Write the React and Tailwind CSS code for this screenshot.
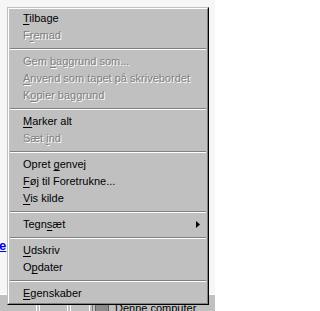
import React from "react";

const font = { fontFamily: '"Liberation Sans", Arial, sans-serif' };

function Label({ text, u }) {
  const before = text.slice(0, u);
  const ch = text.slice(u, u + 1);
  const after = text.slice(u + 1);
  return (
    <span className="whitespace-nowrap">
      {before}
      <span className="underline decoration-1 underline-offset-[2px]">{ch}</span>
      {after}
    </span>
  );
}

function Item({ text, u, disabled, arrow }) {
  return (
    <div
      className={
        "h-[17px] flex items-center pl-[13px] text-[11px] leading-none " +
        (disabled
          ? "text-[#808080] [text-shadow:1px_1px_0_#ffffff]"
          : "text-black")
      }
    >
      <Label text={text} u={u} />
      {arrow && (
        <svg className="ml-auto mr-[6px]" width="4" height="7" viewBox="0 0 4 7">
          <path d="M0 0 L4 3.5 L0 7 Z" fill="#000" />
        </svg>
      )}
    </div>
  );
}

function Sep() {
  return (
    <div className="h-[9px] flex flex-col justify-center">
      <div className="h-px bg-[#808080]" />
      <div className="h-px bg-white" />
    </div>
  );
}

export default function App() {
  return (
    <div
      className="relative w-[215px] h-[311px] overflow-hidden bg-[#f6f6f6] flex flex-col"
      style={font}
    >
      {/* page content */}
      <div className="flex-1 pt-[239px]">
        <span className="block -ml-[1px] text-[13px] font-bold text-[#0000ee] underline leading-none">
          e
        </span>
      </div>
      {/* status bar */}
      <div className="h-[17px] bg-[#c0c0c0] border-t border-white flex items-start pt-[3px] gap-[2px]">
        <div className="w-[37px] h-[16px] border-r border-[#ffffff]" />
        <div className="w-[29px] h-[16px] border-l border-[#808080] border-r border-white" />
        <div className="w-[20px] h-[16px] border-l border-[#808080] border-r border-white" />
        <div className="flex-1 h-[16px] border-l border-[#808080] flex items-start gap-[6px] pl-[2px] pt-[5px]">
          <div className="w-[14px] h-[10px] bg-[#8a8a8a] border border-[#606060]" />
          <span className="text-[11px] leading-none text-black">Denne computer</span>
        </div>
      </div>

      {/* context menu */}
      <div className="absolute left-[7px] top-[7px] w-[202px] border border-t-[#c0c0c0] border-l-[#c0c0c0] border-r-black border-b-black">
        <div className="border border-t-white border-l-white border-r-[#808080] border-b-[#808080] bg-[#c0c0c0] p-px">
          <Item text="Tilbage" u={0} />
          <Item text="Fremad" u={1} disabled />
          <Sep />
          <Item text="Gem baggrund som..." u={4} disabled />
          <Item text="Anvend som tapet på skrivebordet" u={0} disabled />
          <Item text="Kopier baggrund" u={1} disabled />
          <Sep />
          <Item text="Marker alt" u={0} />
          <Item text="Sæt ind" u={4} disabled />
          <Sep />
          <Item text="Opret genvej" u={6} />
          <Item text="Føj til Foretrukne..." u={0} />
          <Item text="Vis kilde" u={0} />
          <Sep />
          <Item text="Tegnsæt" u={4} arrow />
          <Sep />
          <Item text="Udskriv" u={0} />
          <Item text="Opdater" u={1} />
          <Sep />
          <Item text="Egenskaber" u={0} />
        </div>
      </div>
    </div>
  );
}
